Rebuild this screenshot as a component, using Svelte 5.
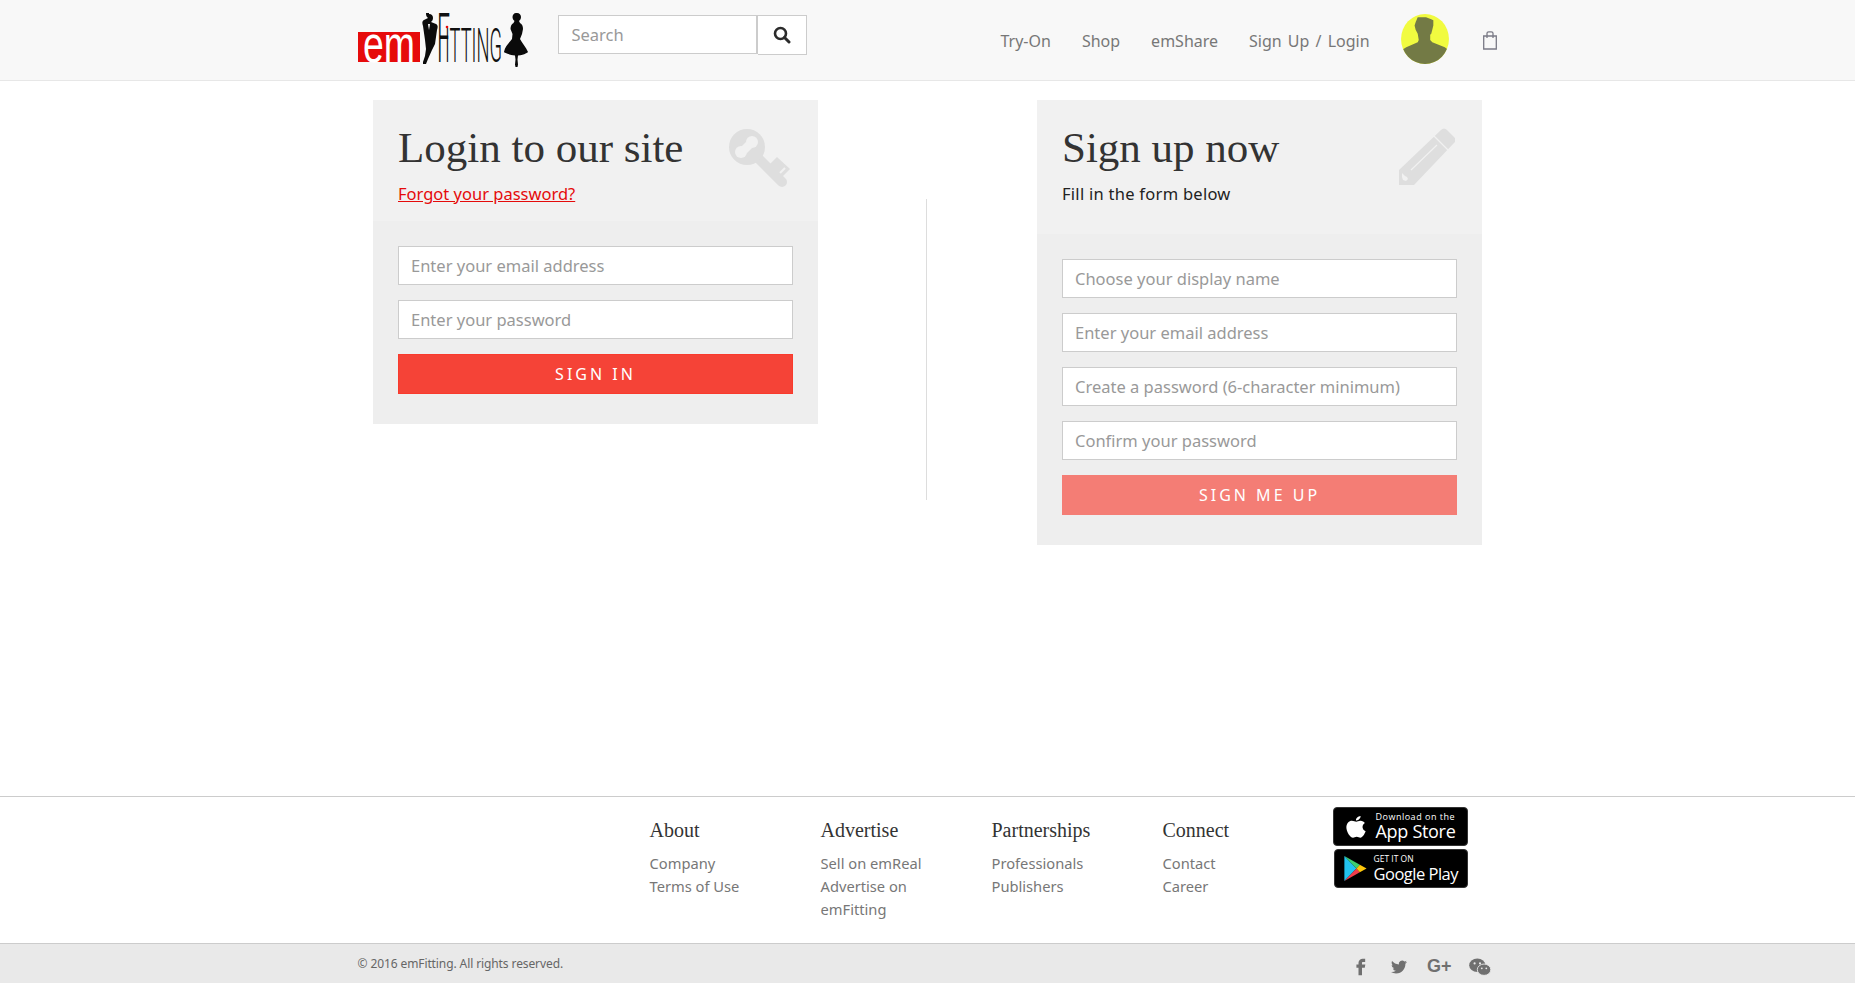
<script>
  const loginFields = ['Enter your email address', 'Enter your password'];
  const signupFields = ['Choose your display name', 'Enter your email address', 'Create a password (6-character minimum)', 'Confirm your password'];
  const columns = [
    { title: 'About', links: ['Company', 'Terms of Use'] },
    { title: 'Advertise', links: ['Sell on emReal', 'Advertise on emFitting'] },
    { title: 'Partnerships', links: ['Professionals', 'Publishers'] },
    { title: 'Connect', links: ['Contact', 'Career'] }
  ];
  const nav = ['Try-On', 'Shop', 'emShare', 'Sign Up / Login'];
</script>

<div class="page">
  <header class="top">
    <div class="wrap topin">
      <svg class="logo" viewBox="0 0 170 54" width="170" height="54" aria-label="emFitting">
        <rect x="0" y="19" width="62" height="30" fill="#e60b0b" />
        <text x="5" y="48.500" class="lg-em" textLength="52" lengthAdjust="spacingAndGlyphs">em</text>
        <path fill="#0a0a0a" d="M71 1c3 0 4 2 4 4 0 2-1 3-2 4l5 2c2 1 2 3 1 6l-2 14-3 6-4 9-2 5-3 0 0-2 2-6 1-7-1-9-2-14c-1-3-1-5 1-6l4-2c-1-1-2-2-2-4 0-2 1-4 3-4z"/>
        <path fill="#fff" d="M70 11h2l-1 6z"/>
        <text x="79" y="49" class="lg-f" textLength="13" lengthAdjust="spacingAndGlyphs">F</text>
        <text x="87" y="49" class="lg-rest" textLength="57" lengthAdjust="spacingAndGlyphs">ITTING</text>
        <circle cx="89" cy="14" r="1.300" fill="#e60b0b" />
        <path fill="#0a0a0a" d="M159 0c2.500 0 4 2 4 4 0 2-1 3-2 4l1 2c2 1 3 3 3 6l-1 5-2 5c2 4 6 8 8 13 0 0-3 3-10 3.500l-.5 4 .5 5-1 5-1 0-1-5 .5-5-.5-4c-6-.5-11-3-11-3.500 1-6 6-10 8-13l.5-5-2-5c0-3 1-5 3-6l1-2c-1-1-2-2-2-4 0-2 1.500-4 3.500-4z"/>
      </svg>

      <form class="search">
        <input type="text" placeholder="Search" />
        <button type="button" aria-label="Search">
          <svg viewBox="0 0 18 18" width="18" height="18"><circle cx="7.500" cy="7.500" r="5.500" fill="none" stroke="#2b2b2b" stroke-width="2.600"/><path d="M11.500 11.500 16 16" stroke="#2b2b2b" stroke-width="3" stroke-linecap="round"/></svg>
        </button>
      </form>

      <nav class="nav">
        {#each nav as item}<a href="#x">{item}</a>{/each}
      </nav>

      <svg class="avatar" viewBox="0 0 46 48" width="48" height="50" aria-label="Profile">
        <defs><clipPath id="av"><ellipse cx="23" cy="24" rx="23" ry="24"/></clipPath></defs>
        <ellipse cx="23" cy="24" rx="23" ry="24" fill="#f1fb40"/>
        <path clip-path="url(#av)" fill="#737a45" d="M16 3h8l5 2 2 1 0 5-1 4-1 4-1 1 0 5 2 2 12 5 4 3v14H0v-14l5-3 11-5 1-2-1-6-2-4-1-4 1-3z"/>
      </svg>

      <svg class="bag" viewBox="0 0 16 19" width="16" height="19" aria-label="Bag">
        <path fill="none" stroke="#7a7a86" stroke-width="1.300" d="M1.700 5h12.600v13H1.700zM5 7V2.300C5 1.300 5.800 .8 6.700 .8h2.600c.9 0 1.700 .5 1.700 1.500V7"/>
      </svg>
    </div>
  </header>

  <main class="main">
    <section class="panel">
      <div class="phead">
        <div>
          <h1>Login to our site</h1>
          <p class="sub"><a href="#x">Forgot your password?</a></p>
        </div>
        <svg class="picon key" viewBox="0 0 62 60" width="62" height="60" aria-hidden="true">
          <path fill="#dedede" d="M48 29 61 41 52 50 39 38z"/>
          <path stroke="#f1f1f1" stroke-width="2" d="M49 47 56 40"/>
          <path fill="none" stroke="#dedede" stroke-width="10" stroke-linecap="round" d="M22 23 53 54"/>
          <circle cx="18" cy="19" r="18" fill="#dedede"/>
          <circle cx="23" cy="14" r="6" fill="#f1f1f1"/>
          <circle cx="12" cy="24" r="6" fill="#f1f1f1"/>
          <path fill="#f1f1f1" d="M17 14 23 20 18 25 12 19z"/>
        </svg>
      </div>
      <form class="pbody">
        {#each loginFields as f}<input class="field" type="text" placeholder={f} />{/each}
        <button type="button" class="cta">SIGN IN</button>
      </form>
    </section>

    <div class="divider"></div>

    <section class="panel">
      <div class="phead tall">
        <div>
          <h1>Sign up now</h1>
          <p class="sub fill">Fill in the form below</p>
        </div>
        <svg class="picon pencil" viewBox="0 0 56 57" width="56" height="57" aria-hidden="true">
          <path fill="#dedede" d="M0 57V42L42 2c2-2 4-2 6 0l7 7c2 2 2 4 0 6L15 57z"/>
          <path stroke="#f1f1f1" stroke-width="1.200" d="M35 8 49 22M12 42 38 17"/>
          <path fill="#f1f1f1" d="M3 45l3 3 2 1 1 2-2 2-3-1-1-3z"/>
        </svg>
      </div>
      <form class="pbody">
        {#each signupFields as f}<input class="field" type="text" placeholder={f} />{/each}
        <button type="button" class="cta soft">SIGN ME UP</button>
      </form>
    </section>
  </main>

  <footer class="foot">
    <div class="wrap footin">
      <div class="cols">
        {#each columns as c}
          <div class="col">
            <h4>{c.title}</h4>
            {#each c.links as l}<a href="#x">{l}</a>{/each}
          </div>
        {/each}
      </div>
      <div class="badges">
        <div class="badge apple">
          <svg viewBox="0 0 24 28" width="22" height="26" aria-hidden="true">
            <path fill="#fff" d="M17 2c.2 2-1.900 5-5 4.800C11.800 4.500 14 2.200 17 2zM12.300 8.200c1 0 2.700-1.200 4.700-1.100 2 .1 3.600 1 4.600 2.500-3.700 2.400-3 7.500.9 9-1 2.800-3.500 7-5.700 7-1.500 0-2.300-1-4-1s-2.700 1-4 1C5.500 25.600 1.500 19 1.500 14.500c0-4.500 3-7.300 6-7.300 1.800 0 3.700 1 4.800 1z"/>
          </svg>
          <div class="bt"><small>Download on the</small><b>App Store</b></div>
        </div>
        <div class="badge gp">
          <svg viewBox="0 0 24 28" width="24" height="27" aria-hidden="true">
            <path fill="#22c3ef" d="M1 1v26l12.500-13z"/>
            <path fill="#3ecf6f" d="M1 1l16 9-3.500 4z"/>
            <path fill="#ef3b4a" d="M1 27l16-9-3.500-4z"/>
            <path fill="#fdc60b" d="M17 10l7 4-7 4-3.500-4z"/>
          </svg>
          <div class="bt gt"><small>GET IT ON</small><b>Google Play</b></div>
        </div>
      </div>
    </div>
    <div class="bar">
      <div class="wrap barin">
        <span>© 2016 emFitting. All rights reserved.</span>
        <div class="social">
          <svg viewBox="0 2 24 24" width="20" height="20" aria-label="Facebook"><path d="M14 8h3V4h-3c-2.800 0-5 2.200-5 5v2H6.500v4H9v9h4.200v-9H16.500l.7-4h-4V9c0-.6.2-1 .8-1z"/></svg>
          <svg viewBox="0 0 24 24" width="16" height="16" aria-label="Twitter"><path d="M23.953 4.570a10 10 0 01-2.825.775 4.958 4.958 0 002.163-2.723c-.951.555-2.005.959-3.127 1.184a4.920 4.920 0 00-8.384 4.482C7.690 8.095 4.067 6.130 1.640 3.162a4.822 4.822 0 00-.666 2.475c0 1.710.870 3.213 2.188 4.096a4.904 4.904 0 01-2.228-.616v.060a4.923 4.923 0 003.946 4.827 4.996 4.996 0 01-2.212.085 4.936 4.936 0 004.604 3.417 9.867 9.867 0 01-6.102 2.105c-.390 0-.779-.023-1.170-.067a13.995 13.995 0 007.557 2.209c9.053 0 13.998-7.496 13.998-13.985 0-.210 0-.420-.015-.630A9.935 9.935 0 0024 4.590z"/></svg>
          <span class="gplus">G+</span>
          <svg class="wc" viewBox="0 0 24 20" width="22" height="18" aria-label="WeChat"><ellipse cx="9" cy="8" rx="9" ry="7.500"/><ellipse cx="16.500" cy="13" rx="7.500" ry="6.300" stroke="#e9e9e9" stroke-width="1"/><circle cx="6" cy="6" r="1.200" fill="#e9e9e9"/><circle cx="12" cy="6" r="1.200" fill="#e9e9e9"/><circle cx="14" cy="11.500" r="1" fill="#e9e9e9"/><circle cx="19" cy="11.500" r="1" fill="#e9e9e9"/></svg>
        </div>
      </div>
    </div>
  </footer>
</div>

<style>
  :global(body) { margin: 0; background: #fff; }
  .page { height: 985px; display: flex; flex-direction: column; font-family: "Noto Sans", "Open Sans", sans-serif; overflow: hidden; }
  .wrap { width: 1140px; margin: 0 auto; }
  .top { height: 81px; box-sizing: border-box; background: #f8f8f8; border-bottom: 1px solid #e7e7e7; flex: none; }
  .topin { display: flex; align-items: flex-start; }
  .logo { margin-top: 13px; flex: none; }
  .lg-em { font: 52px "Liberation Sans", sans-serif; fill: #fff; }
  .lg-f { font: 300 68px Roboto, sans-serif; fill: #111; }
  .lg-rest { font: 300 48px Roboto, sans-serif; fill: #111; }
  .search { display: flex; margin: 15px 0 0 30px; flex: none; }
  .search input { box-sizing: border-box; width: 200px; height: 39px; border: 1px solid #ccc; border-right-width: 2px; padding: 0 13px; font: 16.500px "Noto Sans", sans-serif; background: #fff; outline: 0; }
  .search button { box-sizing: border-box; width: 49px; height: 40px; border: 1px solid #ccc; border-left: 0; background: #fff; padding: 0; display: flex; align-items: center; justify-content: center; }
  input::placeholder { color: #999; opacity: 1; }
  .nav { display: flex; gap: 31px; margin: 30px 0 0 194px; flex: none; }
  .nav a { color: #777; text-decoration: none; font-size: 16px; line-height: 22px; word-spacing: 2px; white-space: nowrap; }
  .avatar { margin: 14px 0 0 31px; flex: none; }
  .bag { margin: 31px 0 0 33px; flex: none; }

  .main { flex: 1; display: flex; align-items: flex-start; padding: 19px 0 0 373px; }
  .panel { width: 445px; flex: none; background: #eee; }
  .phead { background: #f1f1f1; height: 121px; box-sizing: border-box; padding: 23px 25px 0; display: flex; justify-content: space-between; }
  .phead.tall { height: 134px; }
  .picon { margin-top: 5px; flex: none; }
  .key { margin-right: 2px; }
  .pencil { margin-right: 2px; }
  h1 { margin: 0; font: 400 43px/50px "Liberation Serif", serif; color: #333; }
  .sub { margin: 10px 0 0; font-size: 16.500px; line-height: 22px; color: #222; }
  .sub a { color: #e50a0a; }
  .fill { letter-spacing: .27px; }
  .pbody { padding: 25px 25px 30px; display: flex; flex-direction: column; gap: 15px; }
  .field { box-sizing: border-box; height: 39px; border: 1px solid #ccc; background: #fff; padding: 0 12px; font: 16.500px "Noto Sans", sans-serif; outline: 0; }
  .cta { height: 40px; border: 1px solid #f93a2c; background: #f54337; color: #fff; font: 16px "Noto Sans", sans-serif; letter-spacing: 3px; }
  .cta.soft { background: #f47d75; border-color: #f47d75; }
  .divider { width: 1px; height: 301px; margin: 99px 110px 0 108px; background: #ddd; flex: none; }

  .foot { flex: none; border-top: 1px solid #ccc; }
  .footin { display: flex; height: 146px; }
  .cols { display: flex; margin-left: 292px; padding-top: 19px; }
  .col { width: 171px; box-sizing: border-box; padding-right: 20px; }
  .col h4 { margin: 0 0 8px; font: 400 20px/28px "Liberation Serif", serif; color: #333; }
  .col a { display: block; font-size: 14.700px; line-height: 23px; color: #777; text-decoration: none; }
  .badges { display: flex; flex-direction: column; gap: 3px; margin: 10px 0 0 -1px; }
  .badge { box-sizing: border-box; width: 135px; height: 39px; background: #000; border-radius: 4px; border: 1px solid #333; color: #fff; display: flex; align-items: center; padding-left: 11px; gap: 9px; white-space: nowrap; }
  .gp { padding-left: 8px; gap: 7px; margin-left: 1px; width: 134px; }
  .bt { display: flex; flex-direction: column; font-family: "Open Sans", sans-serif; }
  .bt small { font-size: 9px; line-height: 10px; letter-spacing: .5px; }
  .bt b { font-weight: 500; font-size: 18px; line-height: 19px; letter-spacing: -.3px; }
  .gt small { font-size: 8.500px; letter-spacing: 0; }
  .gt b { font-size: 16.500px; letter-spacing: -.5px; }
  .bar { background: #e9e9e9; border-top: 1px solid #ccc; height: 40px; box-sizing: border-box; margin-bottom: 2px; }
  .barin { display: flex; align-items: center; justify-content: space-between; height: 39px; font-size: 12px; color: #666; letter-spacing: -.1px; }
  .social { display: flex; align-items: center; gap: 20px; margin: 6px 0 0; padding-right: 7px; }
  .social svg { fill: #707070; }
  .social .wc { margin-left: -3px; }
  .gplus { font: 700 18px "Liberation Sans", sans-serif; color: #707070; letter-spacing: 0; }
</style>
